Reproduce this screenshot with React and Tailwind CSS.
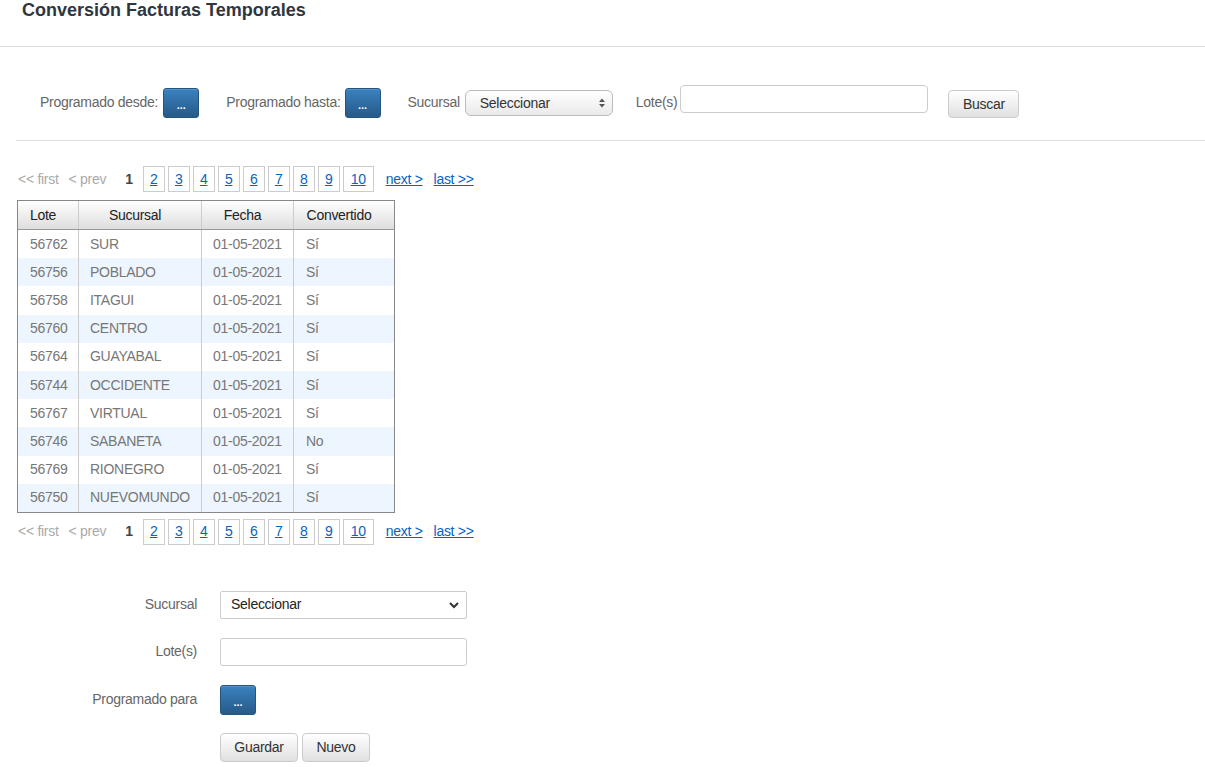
import React from "react";

const rows = [
  ["56762", "SUR", "01-05-2021", "Sí"],
  ["56756", "POBLADO", "01-05-2021", "Sí"],
  ["56758", "ITAGUI", "01-05-2021", "Sí"],
  ["56760", "CENTRO", "01-05-2021", "Sí"],
  ["56764", "GUAYABAL", "01-05-2021", "Sí"],
  ["56744", "OCCIDENTE", "01-05-2021", "Sí"],
  ["56767", "VIRTUAL", "01-05-2021", "Sí"],
  ["56746", "SABANETA", "01-05-2021", "No"],
  ["56769", "RIONEGRO", "01-05-2021", "Sí"],
  ["56750", "NUEVOMUNDO", "01-05-2021", "Sí"],
];

function BlueBtn({ className = "" }) {
  return (
    <button
      className={
        "w-[36px] h-[30px] rounded-[3px] border border-[#245580] bg-gradient-to-b from-[#3a82c0] to-[#265a88] text-white text-[11px] font-bold leading-none flex items-center justify-center pt-[5px] tracking-normal shadow-[inset_0_1px_0_rgba(255,255,255,0.15)] " +
        className
      }
    >
      ...
    </button>
  );
}

function Pager() {
  const nums = [2, 3, 4, 5, 6, 7, 8, 9, 10];
  return (
    <div className="flex items-center h-[26px] pl-[18px] text-[14px]">
      <span className="text-[#aaa]">&lt;&lt; first</span>
      <span className="text-[#aaa] ml-[10px]">&lt; prev</span>
      <span className="font-bold text-[#444] ml-[19px]">1</span>
      <div className="flex gap-[3px] ml-[10px]">
        {nums.map((n) => (
          <span
            key={n}
            className={
              "h-[26px] border border-[#ccc] flex items-center justify-center text-[#0a62c4] underline " +
              (n === 10 ? "w-[31px]" : "w-[22px]")
            }
          >
            {n}
          </span>
        ))}
      </div>
      <span className="text-[#0a62c4] underline ml-[12px]">next &gt;</span>
      <span className="text-[#0a62c4] underline ml-[11px]">last &gt;&gt;</span>
    </div>
  );
}

export default function App() {
  return (
    <div
      className="min-h-[767px] bg-white text-[14px] text-[#333] tracking-[-0.28px]"
      style={{ fontFamily: '"Liberation Sans", Arial, sans-serif' }}
    >
      <div className="h-[47px] border-b border-[#ddd] pl-[22px]">
        <h1 className="text-[18px] leading-[20px] font-bold text-[#2f3640] tracking-normal">
          Conversión Facturas Temporales
        </h1>
      </div>

      <div className="h-[93px] flex items-start pt-[38px] pl-[40px] text-[#666]">
        <span className="mt-[7px] leading-[20px]">Programado desde:</span>
        <BlueBtn className="ml-[5px] mt-[3px]" />
        <span className="ml-[27px] mt-[7px] leading-[20px]">Programado hasta:</span>
        <BlueBtn className="ml-[4px] mt-[3px]" />
        <span className="ml-[27px] mt-[7px] leading-[20px]">Sucursal</span>
        <div className="ml-[5px] mt-[5px] w-[148px] h-[26px] rounded-[6px] border border-[#bbb] bg-gradient-to-b from-white to-[#eaeaea] flex items-center justify-between pl-[14px] pr-[6px] text-[#333]">
          <span>Seleccionar</span>
          <svg width="8" height="12" viewBox="0 0 8 12">
            <path d="M1 5 L4 1.5 L7 5 Z" fill="#555" />
            <path d="M1 7 L4 10.5 L7 7 Z" fill="#555" />
          </svg>
        </div>
        <span className="ml-[23px] mt-[7px] leading-[20px]">Lote(s)</span>
        <div className="ml-[3px] w-[248px] h-[28px] rounded-[4px] border border-[#ccc] bg-white" />
        <button className="ml-[20px] mt-[5px] w-[71px] h-[28px] rounded-[4px] border border-[#ccc] bg-gradient-to-b from-white to-[#e0e0e0] text-[#333] text-[14px]">
          Buscar
        </button>
      </div>

      <div className="ml-[16px] border-t border-[#ddd]" />

      <div className="mt-[25px]">
        <Pager />
      </div>

      <div className="mt-[8px] ml-[17px] w-[378px] border border-[#888]">
        <div className="grid grid-cols-[61px_123px_92px_100px] h-[29px] bg-gradient-to-b from-white to-[#dedede] border-b border-[#999] text-[#222]">
          <div className="flex items-center justify-center pr-[10px] border-r border-[#ccc]">Lote</div>
          <div className="flex items-center justify-center pr-[10px] border-r border-[#ccc]">Sucursal</div>
          <div className="flex items-center justify-center pr-[10px] border-r border-[#ccc]">Fecha</div>
          <div className="flex items-center justify-center pr-[10px]">Convertido</div>
        </div>
        {rows.map((r, i) => (
          <div
            key={r[0]}
            className={
              "grid grid-cols-[61px_123px_92px_100px] h-[28.2px] text-[#777] " +
              (i % 2 === 1 ? "bg-[#edf5fe]" : "bg-white")
            }
          >
            <div className="flex items-center pl-[12px] border-r border-[#ccc]">{r[0]}</div>
            <div className="flex items-center pl-[11px] border-r border-[#ccc]">{r[1]}</div>
            <div className="flex items-center pl-[11px] border-r border-[#ccc]">{r[2]}</div>
            <div className="flex items-center pl-[12px]">{r[3]}</div>
          </div>
        ))}
      </div>

      <div className="mt-[6px]">
        <Pager />
      </div>

      <div className="mt-[46px] grid grid-cols-[197px_247px] gap-x-[23px] gap-y-[19px] items-center text-[#666]">
        <span className="text-right">Sucursal</span>
        <div className="h-[28px] border border-[#ccc] rounded-[2px] bg-white flex items-center justify-between pl-[10px] pr-[6px] text-[#222]">
          <span>Seleccionar</span>
          <svg width="12" height="8" viewBox="0 0 12 8">
            <path d="M2 2 L6 6 L10 2" stroke="#333" strokeWidth="2" fill="none" />
          </svg>
        </div>
        <span className="text-right">Lote(s)</span>
        <div className="h-[28px] border border-[#ccc] rounded-[3px] bg-white" />
        <span className="text-right">Programado para</span>
        <div className="h-[30px]">
          <BlueBtn />
        </div>
        <span />
        <div className="flex gap-[4px] -mt-[1px]">
          <button className="w-[78px] h-[29px] rounded-[4px] border border-[#ccc] bg-gradient-to-b from-white to-[#e0e0e0] text-[#333]">
            Guardar
          </button>
          <button className="w-[68px] h-[29px] rounded-[4px] border border-[#ccc] bg-gradient-to-b from-white to-[#e0e0e0] text-[#333]">
            Nuevo
          </button>
        </div>
      </div>
    </div>
  );
}
